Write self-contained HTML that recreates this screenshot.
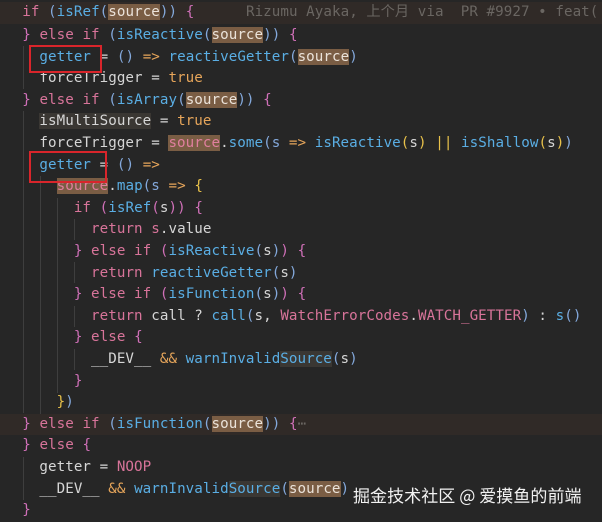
<!DOCTYPE html>
<html><head><meta charset="utf-8"><style>
html,body{margin:0;padding:0;}
body{width:602px;height:522px;background:#262626;position:relative;overflow:hidden;font-family:"DejaVu Sans Mono","Liberation Mono","Noto Sans CJK SC",monospace;font-size:14.2px;letter-spacing:0.06px;color:#d6d6d6;}
.l{position:absolute;left:0;padding-left:5px;width:597px;height:21.6px;line-height:21.6px;white-space:pre;overflow:hidden;}
.hl{background:#302a27;}
.k{color:#d8749a}.f{color:#5aaee4}.p{color:#84a9dc}.b{color:#d070b8}.y{color:#e8c14a}.o{color:#e6a55a}
.s{background:#7a5d44;color:#ebe3da}.sp{background:#7a5d44;color:#e07f9e}.w{background:#3a3733}
.c{color:#6a6662}
.g{position:absolute;width:1px;background:#3e3e3e;}
.box{position:absolute;border:2px solid #d9252b;box-sizing:border-box;}
.wm{position:absolute;left:353px;top:482px;font-family:"Noto Sans CJK SC","Liberation Sans",sans-serif;font-size:17px;color:#f2f2f2;white-space:nowrap;}
</style></head><body>
<div class="l hl" style="top:2px">  <span class="k">if</span> <span class="p">(</span><span class="f">isRef</span><span class="p">(</span><span class="s">source</span><span class="p">))</span> <span class="b">{</span>      <span class="c">Rizumu Ayaka, 上个月 via  PR #9927 • feat(</span></div>
<div class="l" style="top:25px">  <span class="b">}</span> <span class="k">else if</span> <span class="p">(</span><span class="f">isReactive</span><span class="p">(</span><span class="s">source</span><span class="p">))</span> <span class="b">{</span></div>
<div class="l" style="top:46.6px">    <span class="f">getter</span> = <span class="p">()</span> <span class="o">=&gt;</span> <span class="f">reactiveGetter</span><span class="p">(</span><span class="s">source</span><span class="p">)</span></div>
<div class="l" style="top:68.2px">    forceTrigger = <span class="o">true</span></div>
<div class="l" style="top:89.8px">  <span class="b">}</span> <span class="k">else if</span> <span class="p">(</span><span class="f">isArray</span><span class="p">(</span><span class="s">source</span><span class="p">))</span> <span class="b">{</span></div>
<div class="l" style="top:111.4px">    <span class="w">isMultiSource</span> = <span class="o">true</span></div>
<div class="l" style="top:133px">    forceTrigger = <span class="sp">source</span>.<span class="f">some</span><span class="p">(</span><span class="p">s</span> <span class="o">=&gt;</span> <span class="f">isReactive</span><span class="y">(</span>s<span class="y">)</span> <span class="y">||</span> <span class="f">isShallow</span><span class="y">(</span>s<span class="y">)</span><span class="p">)</span></div>
<div class="l" style="top:154.6px">    <span class="f">getter</span> = <span class="p">()</span> <span class="o">=&gt;</span></div>
<div class="l" style="top:176.2px">      <span class="sp">source</span>.<span class="f">map</span><span class="p">(</span><span class="p">s</span> <span class="o">=&gt;</span> <span class="y">{</span></div>
<div class="l" style="top:197.8px">        <span class="k">if</span> <span class="b">(</span><span class="f">isRef</span><span class="b">(</span>s<span class="b">))</span> <span class="b">{</span></div>
<div class="l" style="top:219.4px">          <span class="k">return</span> <span class="k">s</span>.value</div>
<div class="l" style="top:241px">        <span class="b">}</span> <span class="k">else if</span> <span class="b">(</span><span class="f">isReactive</span><span class="p">(</span>s<span class="p">)</span><span class="b">)</span> <span class="b">{</span></div>
<div class="l" style="top:262.6px">          <span class="k">return</span> <span class="f">reactiveGetter</span><span class="p">(</span>s<span class="p">)</span></div>
<div class="l" style="top:284.2px">        <span class="b">}</span> <span class="k">else if</span> <span class="b">(</span><span class="f">isFunction</span><span class="p">(</span>s<span class="p">)</span><span class="b">)</span> <span class="b">{</span></div>
<div class="l" style="top:305.8px">          <span class="k">return</span> call ? <span class="f">call</span><span class="p">(</span>s, <span class="k">WatchErrorCodes</span>.<span class="k">WATCH_GETTER</span><span class="p">)</span> : <span class="f">s</span><span class="p">()</span></div>
<div class="l" style="top:327.4px">        <span class="b">}</span> <span class="k">else</span> <span class="b">{</span></div>
<div class="l" style="top:349px">          __DEV__ <span class="o">&amp;&amp;</span> <span class="f">warnInvalid<span class="w">Source</span></span><span class="p">(</span>s<span class="p">)</span></div>
<div class="l" style="top:370.6px">        <span class="b">}</span></div>
<div class="l" style="top:392.2px">      <span class="y">}</span><span class="p">)</span></div>
<div class="l hl" style="top:413.8px">  <span class="b">}</span> <span class="k">else if</span> <span class="p">(</span><span class="f">isFunction</span><span class="p">(</span><span class="s">source</span><span class="p">))</span> <span class="b">{</span><span class="c">⋯</span></div>
<div class="l" style="top:435.4px">  <span class="b">}</span> <span class="k">else</span> <span class="b">{</span></div>
<div class="l" style="top:457px">    getter = <span class="k">NOOP</span></div>
<div class="l" style="top:478.6px">    __DEV__ <span class="o">&amp;&amp;</span> <span class="f">warnInvalid<span class="w">Source</span></span><span class="p">(</span><span class="s">source</span><span class="p">)</span></div>
<div class="l" style="top:500.2px">  <span class="b">}</span></div>
<div class="g" style="left:23px;top:46px;height:43px"></div>
<div class="g" style="left:23px;top:111px;height:302px"></div>
<div class="g" style="left:40px;top:176px;height:238px"></div>
<div class="g" style="left:57px;top:198px;height:195px"></div>
<div class="g" style="left:74px;top:219px;height:21px"></div>
<div class="g" style="left:74px;top:262px;height:21px"></div>
<div class="g" style="left:74px;top:306px;height:21px"></div>
<div class="g" style="left:74px;top:349px;height:21px"></div>
<div class="g" style="left:23px;top:457px;height:43px"></div>
<div class="box" style="left:29px;top:45px;width:73px;height:28px"></div>
<div class="box" style="left:29px;top:151px;width:78px;height:32px"></div>
<div class="wm">掘金技术社区 @ 爱摸鱼的前端</div>
</body></html>
